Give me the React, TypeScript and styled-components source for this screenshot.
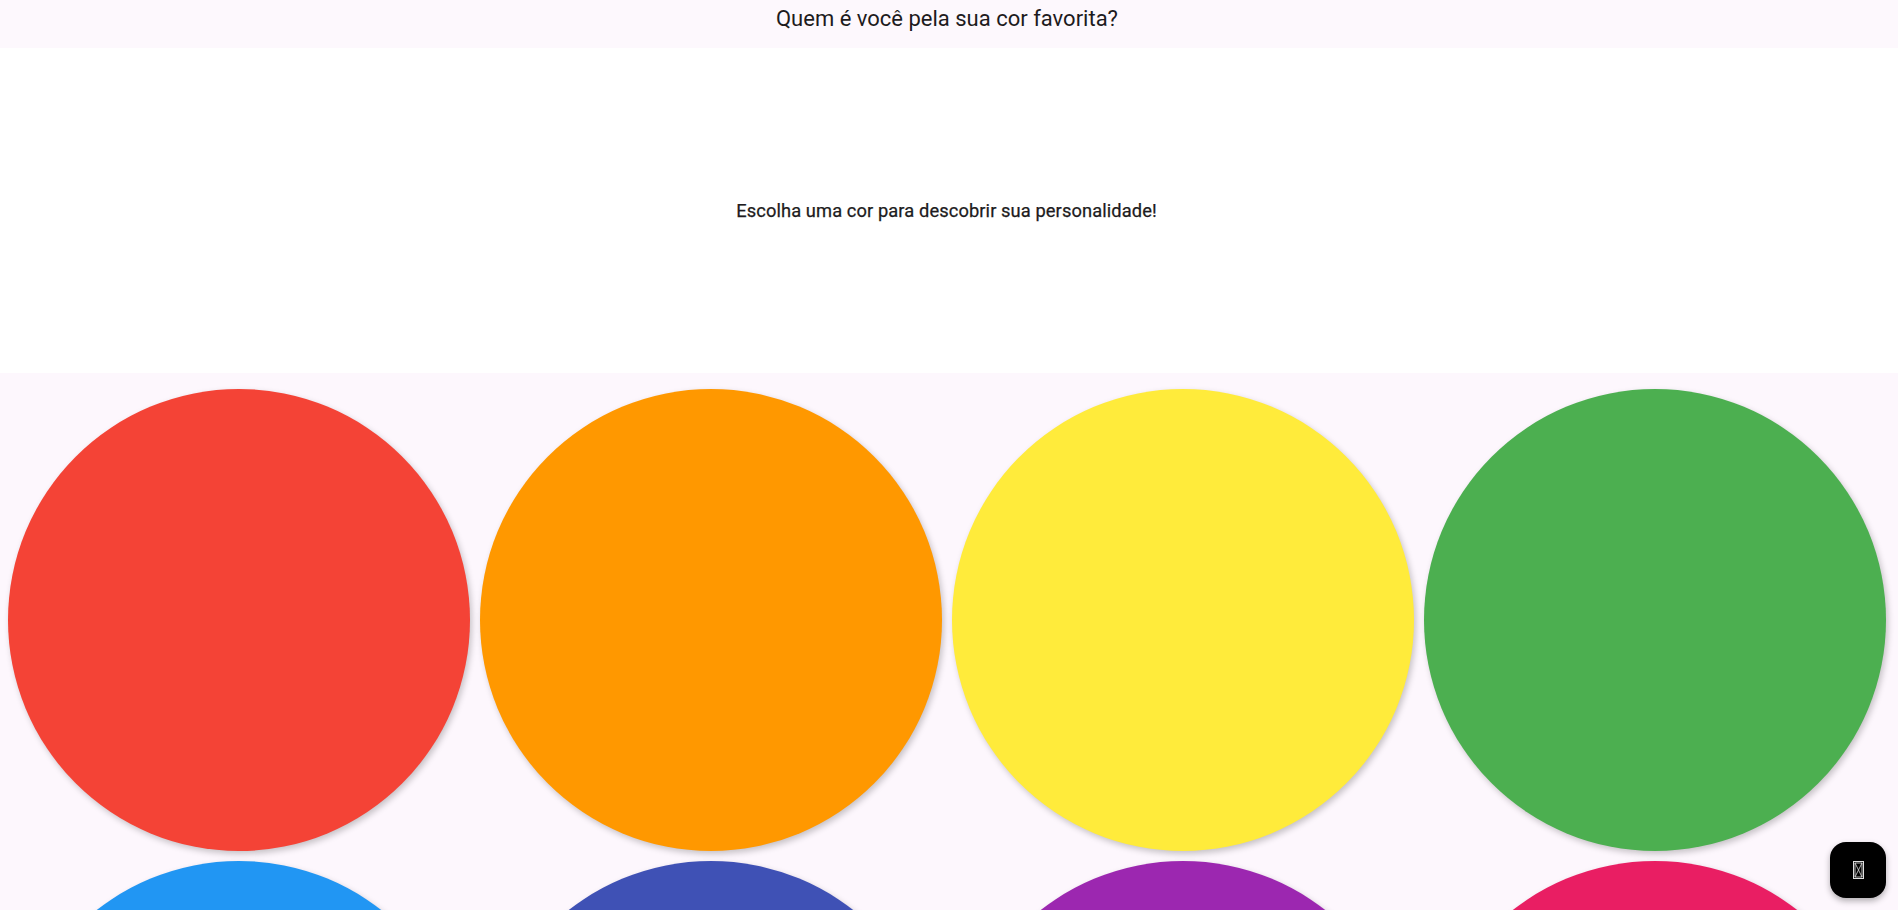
import React from "react";
import styled, { createGlobalStyle } from "styled-components";

const GlobalStyle = createGlobalStyle`
  html, body {
    margin: 0;
    padding: 0;
    overflow: hidden;
    background: #fdf7fd;
    font-family: Roboto, "Noto Sans", sans-serif;
  }
`;

const Page = styled.div`
  display: flex;
  flex-direction: column;
  height: 100vh;
  width: 100vw;
  overflow: hidden;
`;

const AppBar = styled.header`
  height: 48px;
  flex: 0 0 48px;
  background: #fdf8fd;
  display: flex;
  justify-content: center;
  align-items: flex-start;
`;

const Title = styled.h1`
  margin: 0 4px 0 0;
  padding-top: 5px;
  font-size: 22px;
  font-weight: 400;
  line-height: 28px;
  color: #1d1b20;
`;

const Intro = styled.section`
  flex: 0 0 325px;
  background: #ffffff;
  display: flex;
  align-items: center;
  justify-content: center;
`;

const IntroText = styled.p`
  margin: 0 5px 0 0;
  font-size: 18.3px;
  font-weight: 400;
  letter-spacing: 0.1px;
  color: #1d1b20;
  -webkit-text-stroke: 0.25px #1d1b20;
`;

const Grid = styled.main`
  flex: 1;
  background: #fdf7fd;
  display: grid;
  grid-template-columns: repeat(4, 1fr);
  gap: 10px;
  padding: 16px 12px 0 8px;
  align-content: start;
  overflow: hidden;
`;

const Circle = styled.button<{ $color: string }>`
  border: none;
  padding: 0;
  aspect-ratio: 1 / 1;
  width: 100%;
  border-radius: 50%;
  background: ${(p) => p.$color};
  box-shadow: 2px 3px 6px rgba(0, 0, 0, 0.22);
  cursor: pointer;
`;

const Fab = styled.button`
  position: fixed;
  right: 12px;
  bottom: 12px;
  width: 56px;
  height: 56px;
  border: none;
  border-radius: 16px;
  background: #000000;
  box-shadow: 0 3px 6px rgba(0, 0, 0, 0.3);
  display: flex;
  align-items: center;
  justify-content: center;
  cursor: pointer;
`;

const colors = [
  "#f44336",
  "#ff9800",
  "#ffeb3b",
  "#4caf50",
  "#2196f3",
  "#3f51b5",
  "#9c27b0",
  "#e91e63",
];

export default function App() {
  return (
    <Page>
      <GlobalStyle />
      <AppBar>
        <Title>Quem é você pela sua cor favorita?</Title>
      </AppBar>
      <Intro>
        <IntroText>Escolha uma cor para descobrir sua personalidade!</IntroText>
      </Intro>
      <Grid>
        {colors.map((c) => (
          <Circle key={c} $color={c} aria-label={c} />
        ))}
      </Grid>
      <Fab aria-label="ação">
        <svg width="11" height="18" viewBox="0 0 11 18">
          <rect x="0.5" y="0.5" width="10" height="17" fill="none" stroke="#e0e0e0" strokeWidth="1" />
          <rect x="2" y="2" width="7" height="14" fill="none" stroke="#e0e0e0" strokeWidth="0.8" />
          <path d="M2 2 L9 16 M9 2 L2 16" stroke="#e0e0e0" strokeWidth="0.8" />
        </svg>
      </Fab>
    </Page>
  );
}
